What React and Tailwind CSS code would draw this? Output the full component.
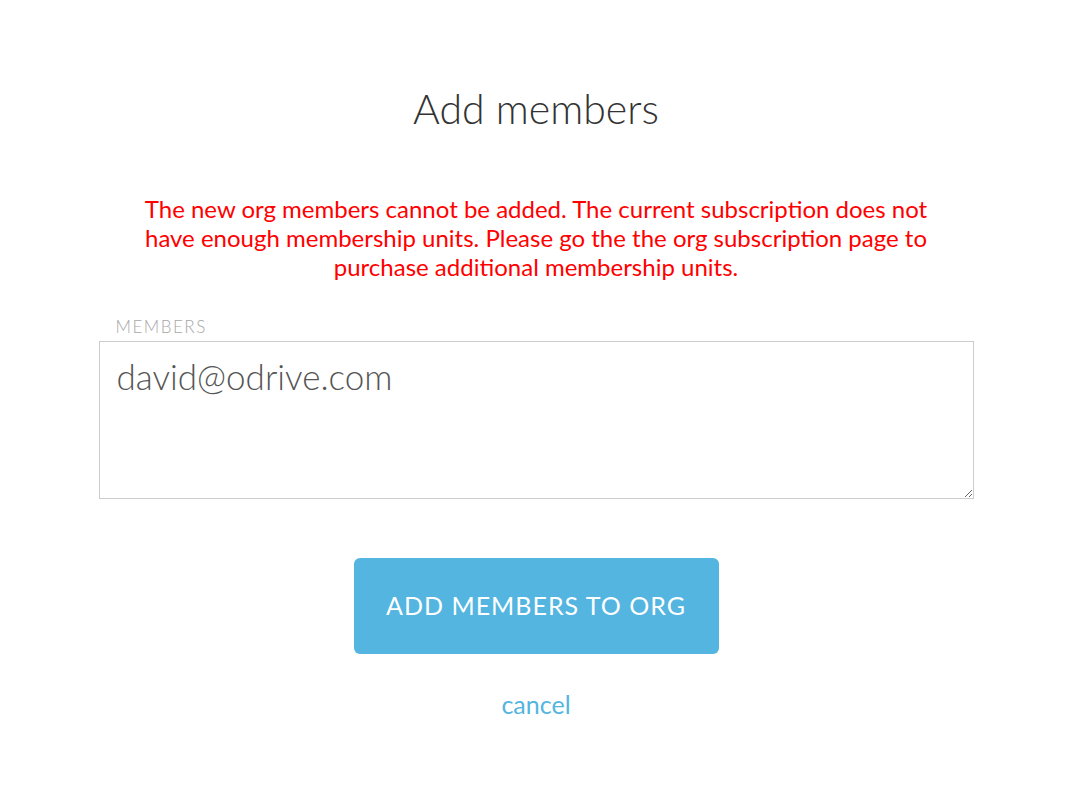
import { useState } from "react";

const App = () => {
  const [members, setMembers] = useState("david@odrive.com");

  return (
    <div className="min-h-[808px] w-full bg-white font-['Lato','Liberation_Sans',sans-serif]">
      <div className="flex flex-col items-center pt-[82px]">
        <h1 className="text-[41px] leading-[54px] font-light text-[#333]">Add members</h1>

        <p className="mt-[58px] w-[800px] text-center text-[24px] leading-[29px] text-[#ff0000]">
          The new org members cannot be added. The current subscription does not have enough
          membership units. Please go the the org subscription page to purchase additional
          membership units.
        </p>

        <div className="mt-[35px] w-[875px]">
          <label className="block pl-[17px] text-[17px] leading-[22px] font-light uppercase tracking-[1.5px] text-[#a8a8a8]">
            Members
          </label>
          <textarea
            value={members}
            onChange={(e) => setMembers(e.target.value)}
            className="mt-[3px] block h-[158px] w-full border border-[#cccccc] px-[17px] py-[12px] text-[35px] leading-[44px] font-light text-[#555] outline-none"
          />
        </div>

        <button className="mt-[59px] h-[96px] w-[365px] rounded-[6px] bg-[#53b5e0] text-[25px] tracking-[1px] text-white">
          ADD MEMBERS TO ORG
        </button>

        <a href="#" className="mt-[35px] text-[25px] leading-[30px] text-[#53b5e0]">
          cancel
        </a>
      </div>
    </div>
  );
};

export default App;
